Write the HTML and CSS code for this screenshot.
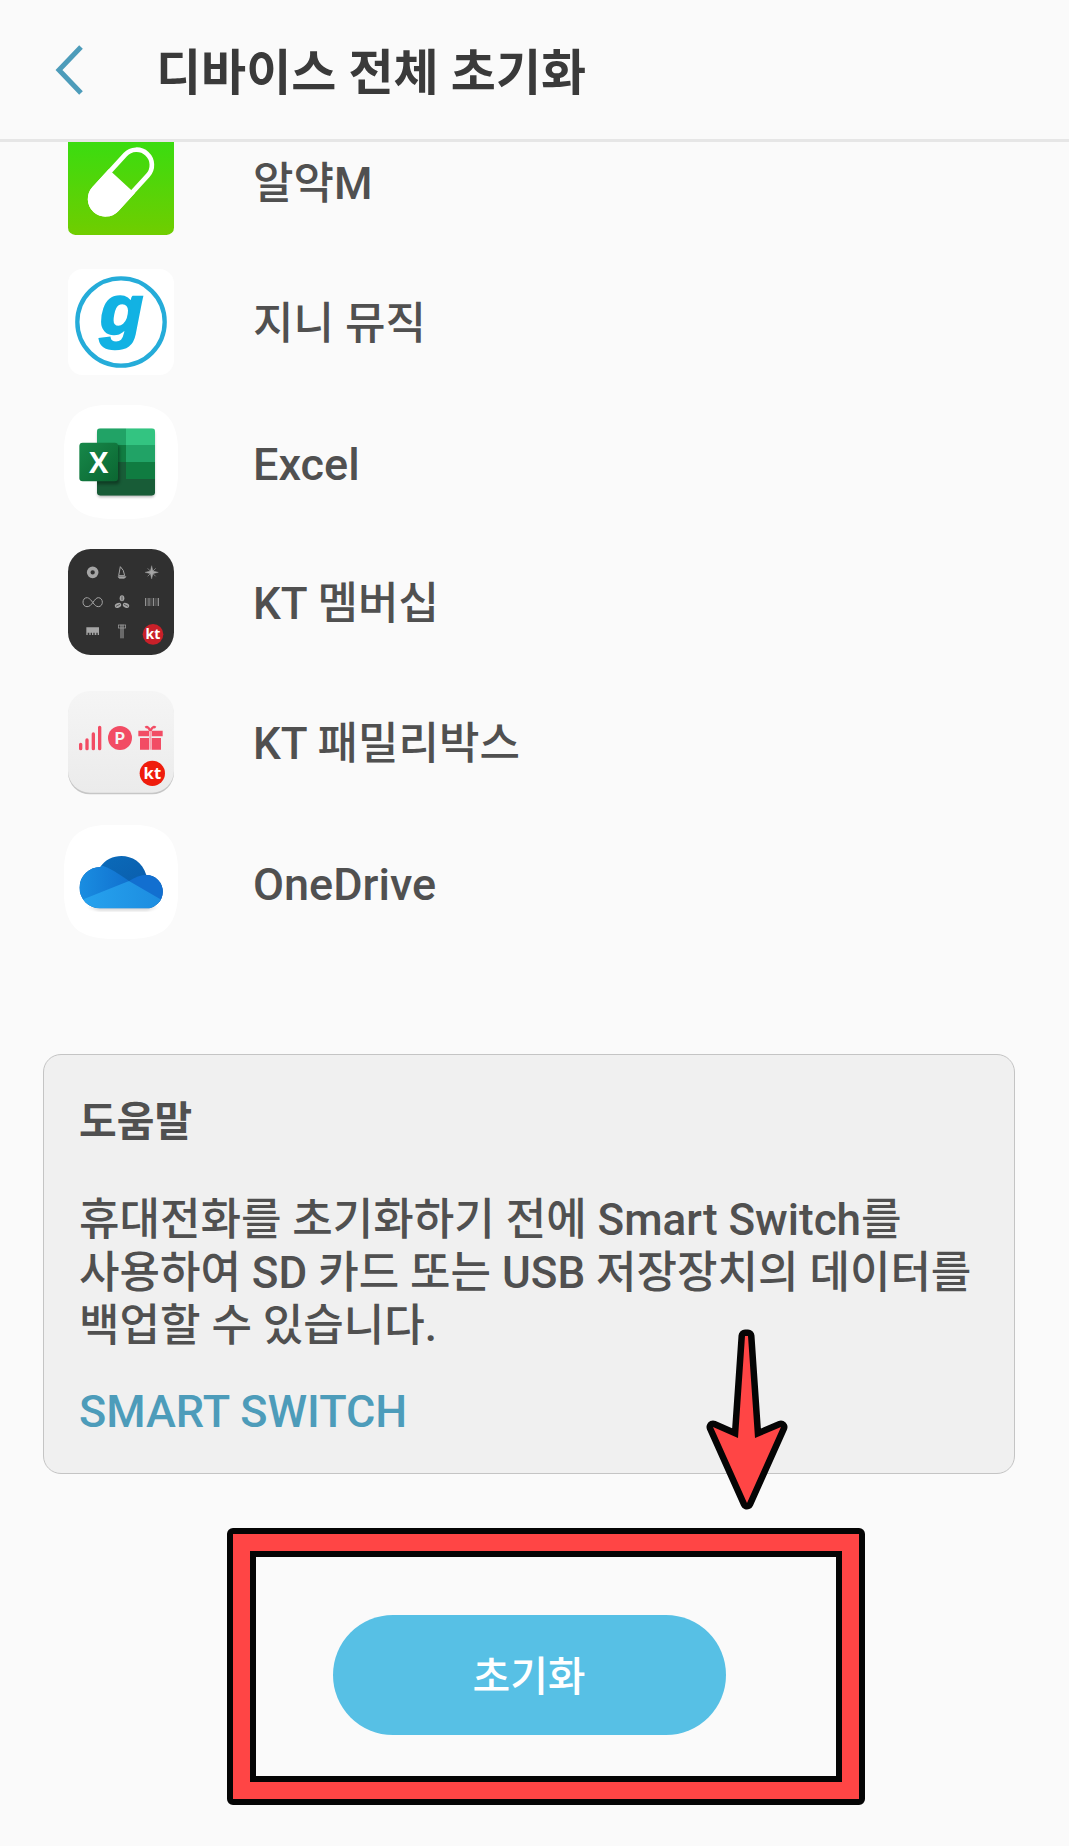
FILE: index.html
```html
<!DOCTYPE html>
<html lang="ko">
<head>
<meta charset="utf-8">
<meta name="viewport" content="width=device-width, initial-scale=1">
<title>디바이스 전체 초기화</title>
<link rel="stylesheet" href="styles.css">
</head>
<body>
<header class="topbar">
  <button class="back" type="button" aria-label="뒤로">
    <svg width="30" height="50" viewBox="0 0 30 50"><path d="M27 2 5 25 27 48" fill="none" stroke="#4d9cba" stroke-width="5"/></svg>
  </button>
  <h1 class="title">디바이스 전체 초기화</h1>
</header>
<main class="content">
  <ul class="apps">
    <li class="app">
      <svg class="icon" viewBox="42 -15 342 342">
        <defs><linearGradient id="green" x1="0" y1="0" x2="0" y2="1"><stop offset="0" stop-color="#33de12"/><stop offset="1" stop-color="#70cd00"/></linearGradient></defs>
        <rect x="54" y="-3" width="318" height="318" rx="22" fill="url(#green)"/>
        <g transform="rotate(42.5 213 156)">
          <rect x="167" y="41" width="92" height="230" rx="46" fill="none" stroke="#fff" stroke-width="14"/>
          <path d="M160 153H266V225A53 53 0 0 1 160 225Z" fill="#fff"/>
        </g>
      </svg>
      <span class="name">알약M</span>
    </li>
    <li class="app">
      <svg class="icon" viewBox="42 15 342 342">
        <rect x="54" y="27" width="318" height="318" rx="44" fill="#fff"/>
        <circle cx="213" cy="186" r="131" fill="#fff" stroke="#25acd9" stroke-width="13"/>
        <text class="mark-g" x="215" y="223" text-anchor="middle">g</text>
      </svg>
      <span class="name">지니 뮤직</span>
    </li>
    <li class="app">
      <svg class="icon" viewBox="42 30 342 342">
        <defs>
          <linearGradient id="xl" x1="0" y1="0" x2="1" y2="1"><stop offset="0" stop-color="#17884a"/><stop offset="1" stop-color="#0b6631"/></linearGradient>
          <clipPath id="sheet"><rect x="141" y="100" width="174" height="202" rx="10"/></clipPath>
          <filter id="soft" x="-20%" y="-20%" width="140%" height="150%"><feGaussianBlur stdDeviation="4"/></filter>
        </defs>
        <path d="M213 27C350 27 386 63 386 200S350 373 213 373 40 337 40 200 76 27 213 27Z" fill="#fff"/>
        <rect x="143" y="108" width="170" height="198" rx="10" fill="#000" opacity=".3" filter="url(#soft)"/>
        <g clip-path="url(#sheet)">
          <path d="M141 100H228V150H141Z" fill="#21a366"/>
          <path d="M228 100H315V150H228Z" fill="#33c481"/>
          <path d="M141 150H228V201H141Z" fill="#107c41"/>
          <path d="M228 150H315V201H228Z" fill="#21a366"/>
          <path d="M141 201H228V252H141Z" fill="#185c37"/>
          <path d="M228 201H315V252H228Z" fill="#107c41"/>
          <path d="M141 252H315V302H141Z" fill="#185c37"/>
          <rect x="95" y="150" width="114" height="118" rx="10" fill="#000" opacity=".35" filter="url(#soft)"/>
        </g>
        <rect x="88" y="143" width="116" height="116" rx="10" fill="url(#xl)"/>
        <text class="mark-x" x="146" y="233" text-anchor="middle">X</text>
      </svg>
      <span class="name name-latin">Excel</span>
    </li>
    <li class="app">
      <svg class="icon" viewBox="42 30 342 342">
        <rect x="54" y="42" width="318" height="318" rx="68" fill="#303030"/>
        <g fill="none" stroke="#a5a5a5" stroke-width="3">
          <circle cx="128" cy="112" r="12" stroke-width="11"/>
          <path d="M141 97l5-4" stroke="#303030" stroke-width="4"/>
          <path d="M211 95 206 122H224Q222 104 211 95Z"/>
          <path d="M204 125H228L223 130H208Z" fill="#a5a5a5" stroke-width="2"/>
          <path d="M305 92l4 16 16 4-16 4-4 16-4-16-16-4 16-4Z" fill="#a5a5a5" stroke-width="1"/>
          <path d="M293 100l24 24M317 100l-24 24" stroke-width="2"/>
          <path d="M128 202C119 189 113 188 111 188 95 188 95 215 111 215 119 215 123 210 129 202S139 188 145 188C161 188 161 215 145 215 138 215 134 210 128 202Z"/>
          <path d="M287 189V213M297 189V213M311 189V213M325 189V213"/>
          <path d="M292 189V213M302 189V213M306 189V213M317 189V213M321 189V213" stroke-width="1"/>
          <path d="M213 269V310M219 269V310"/>
          <rect x="205" y="270" width="22" height="9" stroke-width="2"/>
        </g>
        <g fill="#a5a5a5">
          <ellipse cx="216" cy="190" rx="7" ry="9"/>
          <ellipse cx="204" cy="211" rx="10" ry="7" transform="rotate(-25 204 211)"/>
          <ellipse cx="228" cy="211" rx="10" ry="7" transform="rotate(25 228 211)"/>
          <path d="M109 277H147V300H143V293H139V300H134V293H130V300H126V293H122V300H118V293H113V300H109Z"/>
        </g>
        <path d="M216 184V196M198 214 210 208M222 208 234 214" stroke="#303030" stroke-width="2"/>
        <circle cx="309" cy="298" r="31" fill="#c92029"/>
        <text class="mark-kt" x="309" y="312" text-anchor="middle">kt</text>
      </svg>
      <span class="name">KT 멤버십</span>
    </li>
    <li class="app">
      <svg class="icon" viewBox="42 30 342 342">
        <defs><linearGradient id="pale" x1="0" y1="0" x2="0" y2="1"><stop offset="0" stop-color="#f5f5f5"/><stop offset="1" stop-color="#ebebeb"/></linearGradient></defs>
        <rect x="54" y="56" width="318" height="302" rx="66" fill="#c6c6c6"/>
        <rect x="54" y="48" width="318" height="305" rx="66" fill="url(#pale)"/>
        <g fill="none" stroke="#f24c64" stroke-width="10" stroke-linecap="round"><path d="M92 208V221M111 195V221M130 177V221M149 157V221"/></g>
        <circle cx="210" cy="189" r="36" fill="#f24c64"/>
        <text class="mark-p" x="210" y="206" text-anchor="middle">P</text>
        <path d="M265 167H297V184H265ZM305 167H338V184H305ZM270 189H297V224H270ZM305 189H333V224H305Z" fill="#f24c64"/>
        <path d="M301 168C294 153 290 155 286 158M301 168C308 153 313 155 317 158" fill="none" stroke="#f24c64" stroke-width="7"/>
        <path d="M301 168V224" stroke="#f7a3af" stroke-width="6"/>
        <circle cx="307" cy="295" r="38" fill="#ef1c0c"/>
        <text class="mark-kt mark-kt-large" x="307" y="311" text-anchor="middle">kt</text>
      </svg>
      <span class="name">KT 패밀리박스</span>
    </li>
    <li class="app">
      <svg class="icon" viewBox="42 30 342 342">
        <defs>
          <linearGradient id="c1" x1="0" y1="0" x2="1" y2="1"><stop offset="0" stop-color="#0a6fbe"/><stop offset="1" stop-color="#0b55a4"/></linearGradient>
          <linearGradient id="c2" x1="0" y1="0" x2="1" y2="0"><stop offset="0" stop-color="#1a8fe2"/><stop offset="1" stop-color="#1171cf"/></linearGradient>
          <linearGradient id="c3" x1="0" y1="0" x2="1" y2="0"><stop offset="0" stop-color="#27a4ef"/><stop offset="1" stop-color="#1c8bdf"/></linearGradient>
          <clipPath id="cloud"><path d="M150 280A62 62 0 0 1 151 156C182 108 268 110 289 180A50 50 0 0 1 288 280Z"/></clipPath>
        </defs>
        <path d="M213 27C350 27 386 63 386 200S350 373 213 373 40 337 40 200 76 27 213 27Z" fill="#fff"/>
        <path d="M112 276H324L292 287H146Z" fill="#000" opacity=".15" filter="url(#soft)"/>
        <g clip-path="url(#cloud)">
          <path d="M80 110H350V290H80Z" fill="url(#c1)"/>
          <path d="M80 150H151C172 155 210 178 237 198L150 260 80 280Z" fill="url(#c2)"/>
          <path d="M237 198Q264 180 289 179L350 179V265L320 260Z" fill="#126fd0"/>
          <path d="M80 261 237 198 350 264V290H80Z" fill="url(#c3)"/>
        </g>
      </svg>
      <span class="name name-latin">OneDrive</span>
    </li>
  </ul>
  <section class="help">
    <h2 class="help-title">도움말</h2>
    <p class="help-text">휴대전화를 초기화하기 전에 Smart Switch를 사용하여 SD 카드 또는 USB 저장장치의 데이터를 백업할 수 있습니다.</p>
    <a class="help-link" href="#">SMART SWITCH</a>
  </section>
  <div class="action">
    <button class="reset" type="button">초기화</button>
    <div class="frame"><div class="frame-inner"></div></div>
    <svg class="arrow" width="82" height="182" viewBox="0 0 82 182"><path d="M39 7H42L49 109 75 98 41 174 7 98 32 109Z" fill="#050505" stroke="#050505" stroke-width="13" stroke-linejoin="round"/><path d="M39 7H42L49 109 75 98 41 174 7 98 32 109Z" fill="#ff4545"/></svg>
  </div>
</main>
</body>
</html>
```
FILE: styles.css
```css
* { box-sizing: border-box; }

body {
  margin: 0;
  background: #fafafa;
  color: #505050;
  font-family: Roboto, "Noto Sans CJK KR", sans-serif;
  font-size: 44px;
  font-weight: 500;
  line-height: 53px;
}

.topbar {
  display: flex;
  align-items: center;
  gap: 72px;
  height: 142px;
  padding: 0 54px;
  border-bottom: 3px solid #e6e6e6;
}

.back {
  display: flex;
  padding: 0;
  border: 0;
  background: none;
}

.title {
  margin: 0;
  padding-top: 8px;
  color: #3a3a3a;
  font-size: 49px;
  font-weight: 700;
}

.content {
  display: flow-root;
  padding: 0 54px 40px 43px;
}

.apps {
  margin: 0;
  padding: 0 0 0 21px;
  list-style: none;
  overflow: hidden;
}

.app {
  display: flex;
  align-items: center;
  gap: 75px;
  height: 140px;
}

.app:first-child { margin-top: -30px; }

.icon {
  flex: none;
  width: 114px;
  height: 114px;
}

.name { padding-top: 5px; }

.name-latin { font-size: 45px; }

.mark-g {
  fill: #12b2e3;
  stroke: #12b2e3;
  stroke-width: 7px;
  font: italic bold 212px "Liberation Sans", sans-serif;
}

.mark-x {
  fill: #fff;
  font: bold 87px "Open Sans", sans-serif;
}

.mark-kt {
  fill: #fff;
  font: bold 42px "Open Sans", sans-serif;
}

.mark-kt-large { font-size: 50px; }

.mark-p {
  fill: #f5f5f5;
  font: bold 48px Roboto, sans-serif;
}

.help {
  margin-top: 102px;
  padding: 41px 35px 35px;
  border: 1px solid #c4c4c4;
  border-radius: 18px;
  background: #f0f0f0;
}

.help-title {
  margin: 0 0 45px;
  font-size: 41px;
  font-weight: 700;
}

.help-text {
  margin: 0 0 32px;
  word-break: keep-all;
}

.help-link {
  display: block;
  color: #4d9cba;
  font-size: 45px;
  text-decoration: none;
}

.action {
  position: relative;
  display: flex;
  justify-content: center;
  padding: 141px 0 71px;
}

.reset {
  width: 393px;
  height: 120px;
  padding: 5px 0 0;
  border: 0;
  border-radius: 60px;
  background: #57c0e5;
  color: #fff;
  font: inherit;
  font-size: 41px;
}

.frame {
  position: absolute;
  top: 54px;
  left: calc(50% + 17px);
  width: 638px;
  height: 277px;
  border: 6px solid #050505;
  border-radius: 6px;
  background: none;
  transform: translateX(-50%);
  pointer-events: none;
}

.frame-inner {
  height: 100%;
  border: 17px solid #ff4545;
  outline: 6px solid #050505;
  outline-offset: -23px;
}

.arrow {
  position: absolute;
  top: -145px;
  left: calc(50% + 177px);
  pointer-events: none;
}
```
